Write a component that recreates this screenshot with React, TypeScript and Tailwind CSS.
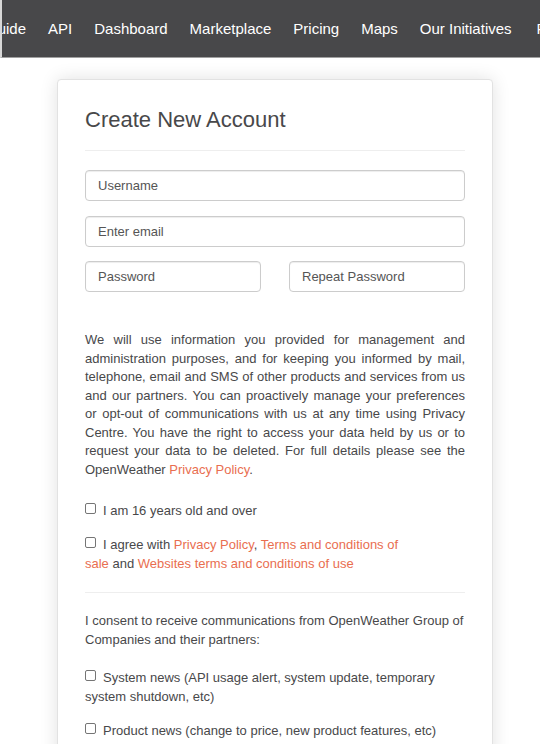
const navItems = ["Guide", "API", "Dashboard", "Marketplace", "Pricing", "Maps", "Our Initiatives", "Partners", "Blog"];

const Check = () => (
  <input
    type="checkbox"
    className="appearance-none inline-block w-[11px] h-[11px] border border-[#757575] rounded-[2px] bg-white align-[1px] mr-[7px]"
  />
);

const Link = ({ children }: { children: React.ReactNode }) => (
  <a href="#" className="text-[#e96e50]">
    {children}
  </a>
);

const App = () => {
  return (
    <div className="min-h-screen bg-white font-['Liberation_Sans',Arial,sans-serif] text-[#48484a] overflow-hidden">
      <nav className="h-[58px] bg-[#48484a] border-b border-b-[#a0a0a0] border-l-2 border-l-[#d8d8d8] flex items-center pt-px overflow-hidden">
        <div className="flex gap-[22px] ml-[-16px] whitespace-nowrap text-[15px] text-white">
          {navItems.map((item) => (
            <span key={item} className={item === "Partners" ? "ml-[3px]" : ""}>
              {item}
            </span>
          ))}
        </div>
      </nav>

      <section className="mt-[21px] ml-[57px] w-[436px] bg-white border border-[#e2e2e2] rounded-[4px] shadow-[0_0_18px_rgba(0,0,0,0.12)] px-[27px] pt-[27px] pb-10">
        <h2 className="text-[22px] leading-[26px]">Create New Account</h2>
        <div className="h-px bg-[#eeeeee] mt-[17px]" />

        <div className="mt-[19px] flex flex-col gap-[14.5px]">
          <input
            className="h-[31px] w-full border border-[#cccccc] rounded-[4px] px-[12px] text-[13px] placeholder:text-[#555] shadow-[inset_0_1px_1px_rgba(0,0,0,0.075)]"
            placeholder="Username"
          />
          <input
            className="h-[31px] w-full border border-[#cccccc] rounded-[4px] px-[12px] text-[13px] placeholder:text-[#555] shadow-[inset_0_1px_1px_rgba(0,0,0,0.075)]"
            placeholder="Enter email"
          />
          <div className="grid grid-cols-2 gap-[28px]">
            <input
              className="h-[31px] w-full border border-[#cccccc] rounded-[4px] px-[12px] text-[13px] placeholder:text-[#555] shadow-[inset_0_1px_1px_rgba(0,0,0,0.075)]"
              placeholder="Password"
            />
            <input
              className="h-[31px] w-full border border-[#cccccc] rounded-[4px] px-[12px] text-[13px] placeholder:text-[#555] shadow-[inset_0_1px_1px_rgba(0,0,0,0.075)]"
              placeholder="Repeat Password"
            />
          </div>
        </div>

        <div className="text-[13px] leading-[1.42857]">
          <p className="mt-[39px] text-justify">
            We will use information you provided for management and administration purposes, and for keeping you
            informed by mail, telephone, email and SMS of other products and services from us and our partners. You can
            proactively manage your preferences or opt-out of communications with us at any time using Privacy Centre.
            You have the right to access your data held by us or to request your data to be deleted. For full details
            please see the OpenWeather <Link>Privacy Policy</Link>.
          </p>

          <div className="mt-[22px]">
            <Check />I am 16 years old and over
          </div>

          <div className="mt-[16px] w-[320px]">
            <Check />I agree with <Link>Privacy Policy</Link>, <Link>Terms and conditions of sale</Link> and{" "}
            <Link>Websites terms and conditions of use</Link>
          </div>

          <div className="h-px bg-[#eeeeee] mt-[19px]" />

          <p className="mt-[19px]">
            I consent to receive communications from OpenWeather Group of Companies and their partners:
          </p>

          <div className="mt-[20px]">
            <Check />System news (API usage alert, system update, temporary system shutdown, etc)
          </div>

          <div className="mt-[16px]">
            <Check />Product news (change to price, new product features, etc)
          </div>
        </div>
      </section>
    </div>
  );
};

export default App;
